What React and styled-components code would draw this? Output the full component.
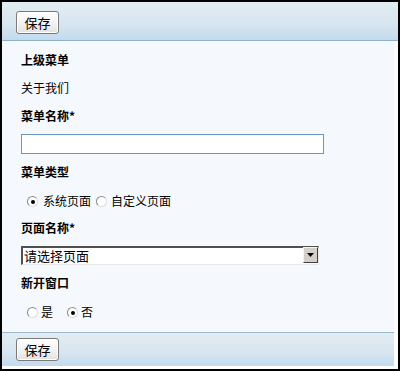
import React from "react";
import styled, { createGlobalStyle } from "styled-components";

const GlobalStyle = createGlobalStyle`
  html, body { margin: 0; padding: 0; background: #ffffff; }
  body {
    font-family: "Liberation Sans", "Noto Sans CJK SC", sans-serif;
    font-size: 12px;
    color: #000;
  }
  * { box-sizing: border-box; }
`;

const Frame = styled.div`
  width: 400px;
  height: 371px;
  border: 2px solid #000;
  display: flex;
  flex-direction: column;
  background: #ffffff;
`;

const Toolbar = styled.div`
  height: ${(p) => p.$h}px;
  flex: none;
  display: flex;
  align-items: flex-start;
  padding: ${(p) => p.$pt}px 0 0 14px;
  background: linear-gradient(to bottom, #e3ecf2 0%, #d7e5f0 60%, #c3daee 100%);
  border-top: ${(p) => (p.$top ? "1px solid #9ab7c9" : "none")};
  border-bottom: ${(p) => (p.$bottom ? "1px solid #8fb2c8" : "none")};
  margin-right: ${(p) => p.$mr || 0}px;
`;

const Button = styled.button`
  width: 43px;
  height: 23px;
  padding: 0;
  border: 1px solid #7a7a7a;
  border-radius: 3px;
  background: linear-gradient(to bottom, #ffffff 0%, #f3f3f3 50%, #e2e2e2 100%);
  font-family: "Noto Sans CJK SC", sans-serif;
  font-size: 13px;
  color: #000;
  line-height: 21px;
  box-shadow: inset 0 0 0 1px #ffffff;
`;

const Content = styled.div`
  flex: 1;
  background: #f5f9fd;
  padding: 9px 0 0 19px;
  margin-right: 4px;
  display: flex;
  flex-direction: column;
`;

const Group = styled.div`
  display: flex;
  flex-direction: column;
  gap: 8px;
  margin-bottom: 8px;
`;

const Label = styled.div`
  font-family: "Noto Sans CJK SC", sans-serif;
  font-weight: bold;
  font-size: 12px;
  line-height: 20px;
  height: 20px;
`;

const Value = styled.div`
  font-family: "Noto Sans CJK SC", sans-serif;
  font-size: 12px;
  line-height: 20px;
  height: 20px;
`;

const TextInput = styled.input`
  width: 303px;
  height: 20px;
  border: 1px solid #6a98bd;
  background: #fff;
  padding: 0 3px;
  outline: none;
  font-size: 12px;
`;

const RadioRow = styled.div`
  display: flex;
  align-items: center;
  height: 20px;
  padding-left: 6px;
  padding-top: 1px;
  font-family: "Noto Sans CJK SC", sans-serif;
  font-size: 12px;
`;

const RadioItem = styled.label`
  display: flex;
  align-items: center;
  margin-right: ${(p) => p.$mr}px;
`;

const RadioCircle = styled.span`
  width: 11px;
  height: 11px;
  border-radius: 50%;
  border: 1px solid #8a8a8a;
  border-right-color: #dcdcdc;
  border-bottom-color: #dcdcdc;
  background: #fff;
  display: flex;
  align-items: center;
  justify-content: center;
  margin-right: ${(p) => p.$gap}px;
  margin-top: 2px;
  &::after {
    content: "";
    width: 4px;
    height: 4px;
    border-radius: 50%;
    background: ${(p) => (p.$checked ? "#000" : "transparent")};
  }
`;

const Select = styled.div`
  width: 298px;
  height: 19px;
  display: flex;
  background: #fff;
  border-top: 2px solid #505050;
  border-left: 2px solid #505050;
  border-right: 1px solid #e8e8e8;
  border-bottom: 1px solid #e8e8e8;
`;

const SelectText = styled.div`
  flex: 1;
  font-family: "Noto Sans CJK SC", sans-serif;
  font-size: 13px;
  line-height: 16px;
  padding-left: 1px;
`;

const SelectButton = styled.div`
  width: 15px;
  height: 16px;
  margin-top: -1px;
  background: #d4d0c8;
  border-top: 1px solid #f4f4f4;
  border-left: 1px solid #f4f4f4;
  border-right: 1px solid #404040;
  border-bottom: 1px solid #404040;
  display: flex;
  align-items: center;
  justify-content: center;
`;

const BottomGap = styled.div`
  height: 3px;
  flex: none;
`;

function Radio({ checked, label, mr, gap }) {
  return (
    <RadioItem $mr={mr}>
      <RadioCircle $checked={checked} $gap={gap} />
      {label}
    </RadioItem>
  );
}

export default function App() {
  return (
    <>
      <GlobalStyle />
      <Frame>
        <Toolbar $h={39} $pt={9} $bottom>
          <Button>保存</Button>
        </Toolbar>
        <Content>
          <Group>
            <Label>上级菜单</Label>
            <Value>关于我们</Value>
          </Group>
          <Group>
            <Label>菜单名称*</Label>
            <TextInput />
          </Group>
          <Group>
            <Label>菜单类型</Label>
            <RadioRow>
              <Radio checked label="系统页面" mr={5} gap={5} />
              <Radio label="自定义页面" mr={0} gap={4} />
            </RadioRow>
          </Group>
          <Group>
            <Label>页面名称*</Label>
            <Select>
              <SelectText>请选择页面</SelectText>
              <SelectButton>
                <svg width="7" height="4" viewBox="0 0 7 4">
                  <path d="M0 0h7L3.5 4z" fill="#000" />
                </svg>
              </SelectButton>
            </Select>
          </Group>
          <Group>
            <Label>新开窗口</Label>
            <RadioRow>
              <Radio label="是" mr={14} gap={3} />
              <Radio checked label="否" mr={0} gap={3} />
            </RadioRow>
          </Group>
        </Content>
        <Toolbar $h={34} $pt={5} $top $mr={4}>
          <Button>保存</Button>
        </Toolbar>
        <BottomGap />
      </Frame>
    </>
  );
}
